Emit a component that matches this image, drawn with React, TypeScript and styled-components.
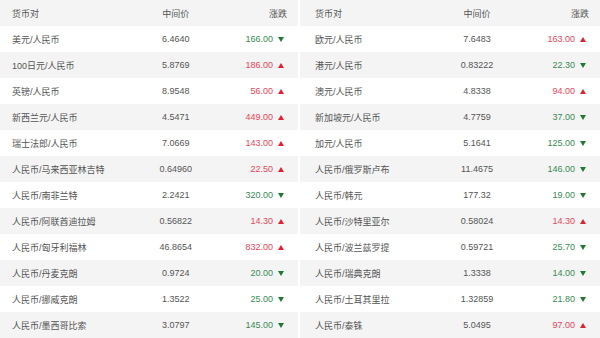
import React from "react";
import styled, { createGlobalStyle } from "styled-components";

type Row = [string, string, string, "up" | "down"];

const left: Row[] = [
  ["美元/人民币", "6.4640", "166.00", "down"],
  ["100日元/人民币", "5.8769", "186.00", "up"],
  ["英镑/人民币", "8.9548", "56.00", "up"],
  ["新西兰元/人民币", "4.5471", "449.00", "up"],
  ["瑞士法郎/人民币", "7.0669", "143.00", "up"],
  ["人民币/马来西亚林吉特", "0.64960", "22.50", "up"],
  ["人民币/南非兰特", "2.2421", "320.00", "down"],
  ["人民币/阿联酋迪拉姆", "0.56822", "14.30", "up"],
  ["人民币/匈牙利福林", "46.8654", "832.00", "up"],
  ["人民币/丹麦克朗", "0.9724", "20.00", "down"],
  ["人民币/挪威克朗", "1.3522", "25.00", "down"],
  ["人民币/墨西哥比索", "3.0797", "145.00", "down"],
];

const right: Row[] = [
  ["欧元/人民币", "7.6483", "163.00", "up"],
  ["港元/人民币", "0.83222", "22.30", "down"],
  ["澳元/人民币", "4.8338", "94.00", "up"],
  ["新加坡元/人民币", "4.7759", "37.00", "down"],
  ["加元/人民币", "5.1641", "125.00", "down"],
  ["人民币/俄罗斯卢布", "11.4675", "146.00", "down"],
  ["人民币/韩元", "177.32", "19.00", "down"],
  ["人民币/沙特里亚尔", "0.58024", "14.30", "up"],
  ["人民币/波兰兹罗提", "0.59721", "25.70", "down"],
  ["人民币/瑞典克朗", "1.3338", "14.00", "down"],
  ["人民币/土耳其里拉", "1.32859", "21.80", "down"],
  ["人民币/泰铢", "5.0495", "97.00", "up"],
];

const RateTable = ({ rows, inset }: { rows: Row[]; inset: number }) => (
  <Table>
    <Line $shade>
      <Name $inset={inset}>货币对</Name>
      <Mid>中间价</Mid>
      <Change>涨跌</Change>
    </Line>
    {rows.map(([pair, mid, diff, dir], i) => (
      <Line key={pair} $shade={i % 2 === 1}>
        <Name $inset={inset}>{pair}</Name>
        <Mid>{mid}</Mid>
        <Change>
          <Amount $dir={dir}>{diff}</Amount>
          <Arrow $dir={dir} />
        </Change>
      </Line>
    ))}
  </Table>
);

export default function App() {
  return (
    <>
      <GlobalStyle />
      <Page>
        <RateTable rows={left} inset={12} />
        <RateTable rows={right} inset={15} />
      </Page>
    </>
  );
}

const GlobalStyle = createGlobalStyle`
  body {
    margin: 0;
    background: #fff;
    font-family: "Liberation Sans", "Noto Sans CJK SC", sans-serif;
  }
`;

const Page = styled.div`
  display: grid;
  grid-template-columns: 298px 300px;
  column-gap: 2px;
  width: 600px;
  height: 338px;
  overflow: hidden;
`;

const Table = styled.div`
  display: flex;
  flex-direction: column;
`;

const Line = styled.div<{ $shade?: boolean }>`
  display: grid;
  grid-template-columns: 44% 30% 1fr;
  align-items: center;
  height: 26px;
  background: ${({ $shade }) => ($shade ? "#f4f4f4" : "#fff")};
  font-size: 9px;
  color: #555;
`;

const Name = styled.div<{ $inset: number }>`
  padding-left: ${({ $inset }) => $inset}px;
  white-space: nowrap;
`;

const Mid = styled.div`
  text-align: center;
`;

const Change = styled.div`
  display: flex;
  justify-content: flex-end;
  align-items: center;
  gap: 5px;
  padding-right: 11px;
`;

const Amount = styled.span<{ $dir: "up" | "down" }>`
  color: ${({ $dir }) => ($dir === "up" ? "#e8455a" : "#3a8a55")};
`;

const Arrow = styled.span<{ $dir: "up" | "down" }>`
  width: 0;
  height: 0;
  margin-right: 3px;
  border-left: 3px solid transparent;
  border-right: 3px solid transparent;
  ${({ $dir }) =>
    $dir === "up"
      ? "border-bottom: 5px solid #e3202f;"
      : "border-top: 5px solid #1e7a30;"}
`;
